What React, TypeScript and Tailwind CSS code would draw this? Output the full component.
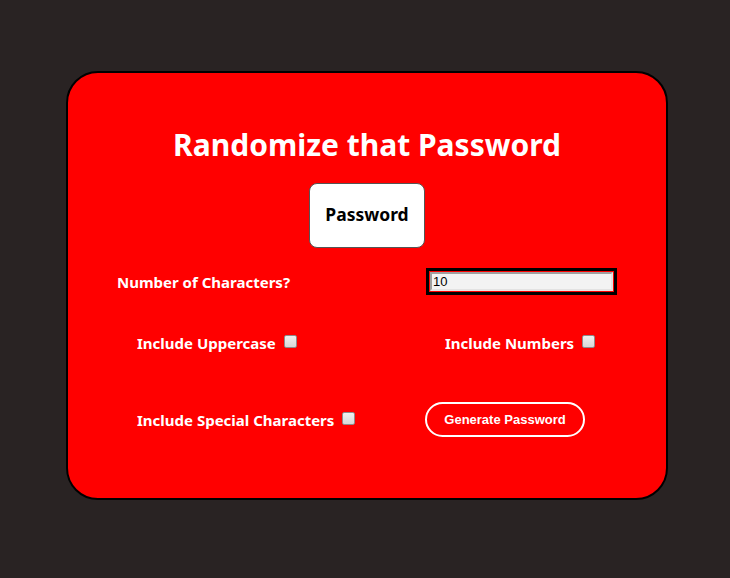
import { useState } from "react";

function Box({ checked, onClick }: { checked: boolean; onClick: () => void }) {
  return (
    <span
      onClick={onClick}
      className={`mb-[3px] ml-[8px] inline-block h-[13px] w-[13px] shrink-0 rounded-[2px] border border-[#8d8d8d] ${
        checked ? "bg-[#cfcfcf]" : "bg-gradient-to-b from-[#f0f0f0] to-[#d8d8d8]"
      }`}
    />
  );
}

export default function App() {
  const [length, setLength] = useState("10");
  const [upper, setUpper] = useState(false);
  const [numbers, setNumbers] = useState(false);
  const [special, setSpecial] = useState(false);

  const label = "text-[15px] font-bold text-white leading-[20px]";

  return (
    <div
      className="min-h-[578px] bg-[#292323] pt-[71px]"
      style={{ fontFamily: '"Noto Sans", "Open Sans", sans-serif' }}
    >
      <div className="ml-[66px] flex h-[429px] w-[602px] flex-col items-center rounded-[32px] border-2 border-black bg-[#ff0000]">
        <h1 className="mt-[53px] text-[30px] font-bold leading-[38px] text-white">
          Randomize that Password
        </h1>

        {/* result box */}
        <div className="mt-[19px] flex h-[65px] w-[116px] items-center justify-center rounded-lg border border-[#555] bg-white pb-[3px] text-[17.5px] font-bold text-black">
          Password
        </div>

        {/* length */}
        <div className="mt-[20px] flex w-full items-center">
          <div className="w-[358px] pl-[49px]">
            <span className={label}>Number of Characters?</span>
          </div>
          <div className="border-[3px] border-black p-px">
            <input
              value={length}
              onChange={(e) => setLength(e.target.value)}
              className="block h-[19px] w-[183px] border-2 border-t-[#a0a0a0] border-l-[#a0a0a0] border-r-[#e3e3e3] border-b-[#e3e3e3] bg-[#f3f3f3] px-px text-[13px] text-black outline-none"
              style={{ fontFamily: '"Liberation Sans", Arial, sans-serif' }}
            />
          </div>
        </div>

        {/* options */}
        <div className="mt-[38px] flex w-full items-center">
          <div className="flex w-[358px] items-center pl-[69px]">
            <span className={label}>Include Uppercase</span>
            <Box checked={upper} onClick={() => setUpper(!upper)} />
          </div>
          <div className="flex items-center pl-[19px]">
            <span className={label}>Include Numbers</span>
            <Box checked={numbers} onClick={() => setNumbers(!numbers)} />
          </div>
        </div>

        <div className="mt-[49px] flex w-full items-center">
          <div className="flex w-[357px] items-center pl-[69px]">
            <span className={label}>Include Special Characters</span>
            <Box checked={special} onClick={() => setSpecial(!special)} />
          </div>
          <button
            className="h-[35px] w-[160px] rounded-full border-2 border-white text-[13px] font-bold text-white"
            style={{ fontFamily: '"Liberation Sans", Arial, sans-serif' }}
          >
            Generate Password
          </button>
        </div>
      </div>
    </div>
  );
}
